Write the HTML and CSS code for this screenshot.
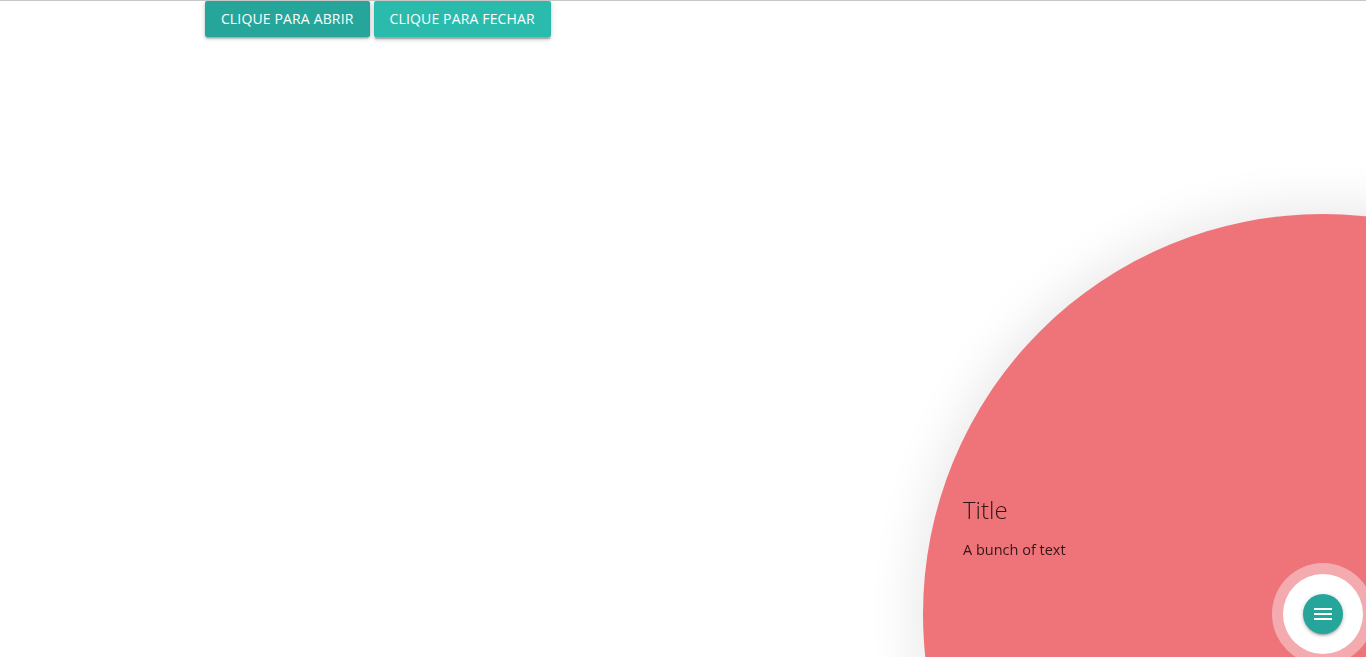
FILE: index.html
```html
<!DOCTYPE html>
<html lang="pt">
<head>
<meta charset="utf-8">
<title>Tap target</title>
<link rel="stylesheet" href="styles.css">
</head>
<body>
<div class="container">
  <div class="actions">
    <button class="btn">Clique para abrir</button>
    <button class="btn btn-hover">Clique para fechar</button>
  </div>
</div>

<div class="tap-target">
  <div class="tap-circle">
    <div class="tap-content">
      <h5 class="tap-title">Title</h5>
      <p class="tap-text">A bunch of text</p>
    </div>
  </div>
  <div class="tap-wave">
    <a class="fab" href="#">
      <svg width="18" height="12" viewBox="0 0 18 12" aria-hidden="true">
        <rect x="0" y="0" width="18" height="2" fill="#fff"/>
        <rect x="0" y="5" width="18" height="2" fill="#fff"/>
        <rect x="0" y="10" width="18" height="2" fill="#fff"/>
      </svg>
    </a>
  </div>
</div>
</body>
</html>
```

FILE: styles.css
```css
html, body {
  margin: 0;
  padding: 0;
}
body {
  border-top: 1px solid #c8c8c8;
  font-family: "Open Sans", "Noto Sans", sans-serif;
  color: rgba(0, 0, 0, 0.87);
  background: #fff;
  height: 656px;
  overflow: hidden;
}
.container {
  width: 70%;
  margin: 0 auto;
}
.actions {
  display: flex;
  gap: 4px;
}
.btn {
  height: 36px;
  padding: 0 16px 1px;
  border: none;
  border-radius: 2px;
  background: #26a69a;
  color: #fff;
  font-family: inherit;
  font-size: 14px;
  letter-spacing: 0.15px;
  text-transform: uppercase;
  box-shadow: 0 2px 2px 0 rgba(0,0,0,0.14), 0 3px 1px -2px rgba(0,0,0,0.12), 0 1px 5px 0 rgba(0,0,0,0.2);
  cursor: pointer;
}
.btn-hover {
  background: #2bbbad;
  box-shadow: 0 3px 3px 0 rgba(0,0,0,0.14), 0 1px 7px 0 rgba(0,0,0,0.12), 0 3px 1px -1px rgba(0,0,0,0.2);
}
.tap-target {
  position: fixed;
  inset: 0;
  overflow: hidden;
  pointer-events: none;
}
.tap-circle {
  position: absolute;
  left: 923px;
  top: 214px;
  width: 800px;
  height: 800px;
  border-radius: 50%;
  background: #ef7479;
  box-shadow: 0 0 50px 8px rgba(0,0,0,0.09);
}
.tap-content {
  position: absolute;
  left: 40px;
  top: 280px;
  width: 300px;
}
.tap-title {
  margin: 0;
  font-size: 24px;
  font-weight: 300;
  line-height: 32px;
  color: rgba(0,0,0,0.82);
}
.tap-text {
  margin: 14px 0 0;
  font-size: 14.5px;
  font-weight: 400;
  line-height: 20px;
  color: rgba(0,0,0,0.8);
}
.tap-wave {
  position: absolute;
  left: 1272px;
  top: 563px;
  width: 102px;
  height: 102px;
  border-radius: 50%;
  background: #f4abaf;
  display: flex;
  align-items: center;
  justify-content: center;
}
.tap-wave::before {
  content: "";
  position: absolute;
  left: 11px;
  top: 11px;
  width: 80px;
  height: 80px;
  border-radius: 50%;
  background: #fff;
}
.fab {
  position: relative;
  width: 40px;
  height: 40px;
  border-radius: 50%;
  background: #26a69a;
  display: flex;
  align-items: center;
  justify-content: center;
  box-shadow: 0 2px 2px 0 rgba(0,0,0,0.14), 0 3px 1px -2px rgba(0,0,0,0.12), 0 1px 5px 0 rgba(0,0,0,0.2);
}
```
